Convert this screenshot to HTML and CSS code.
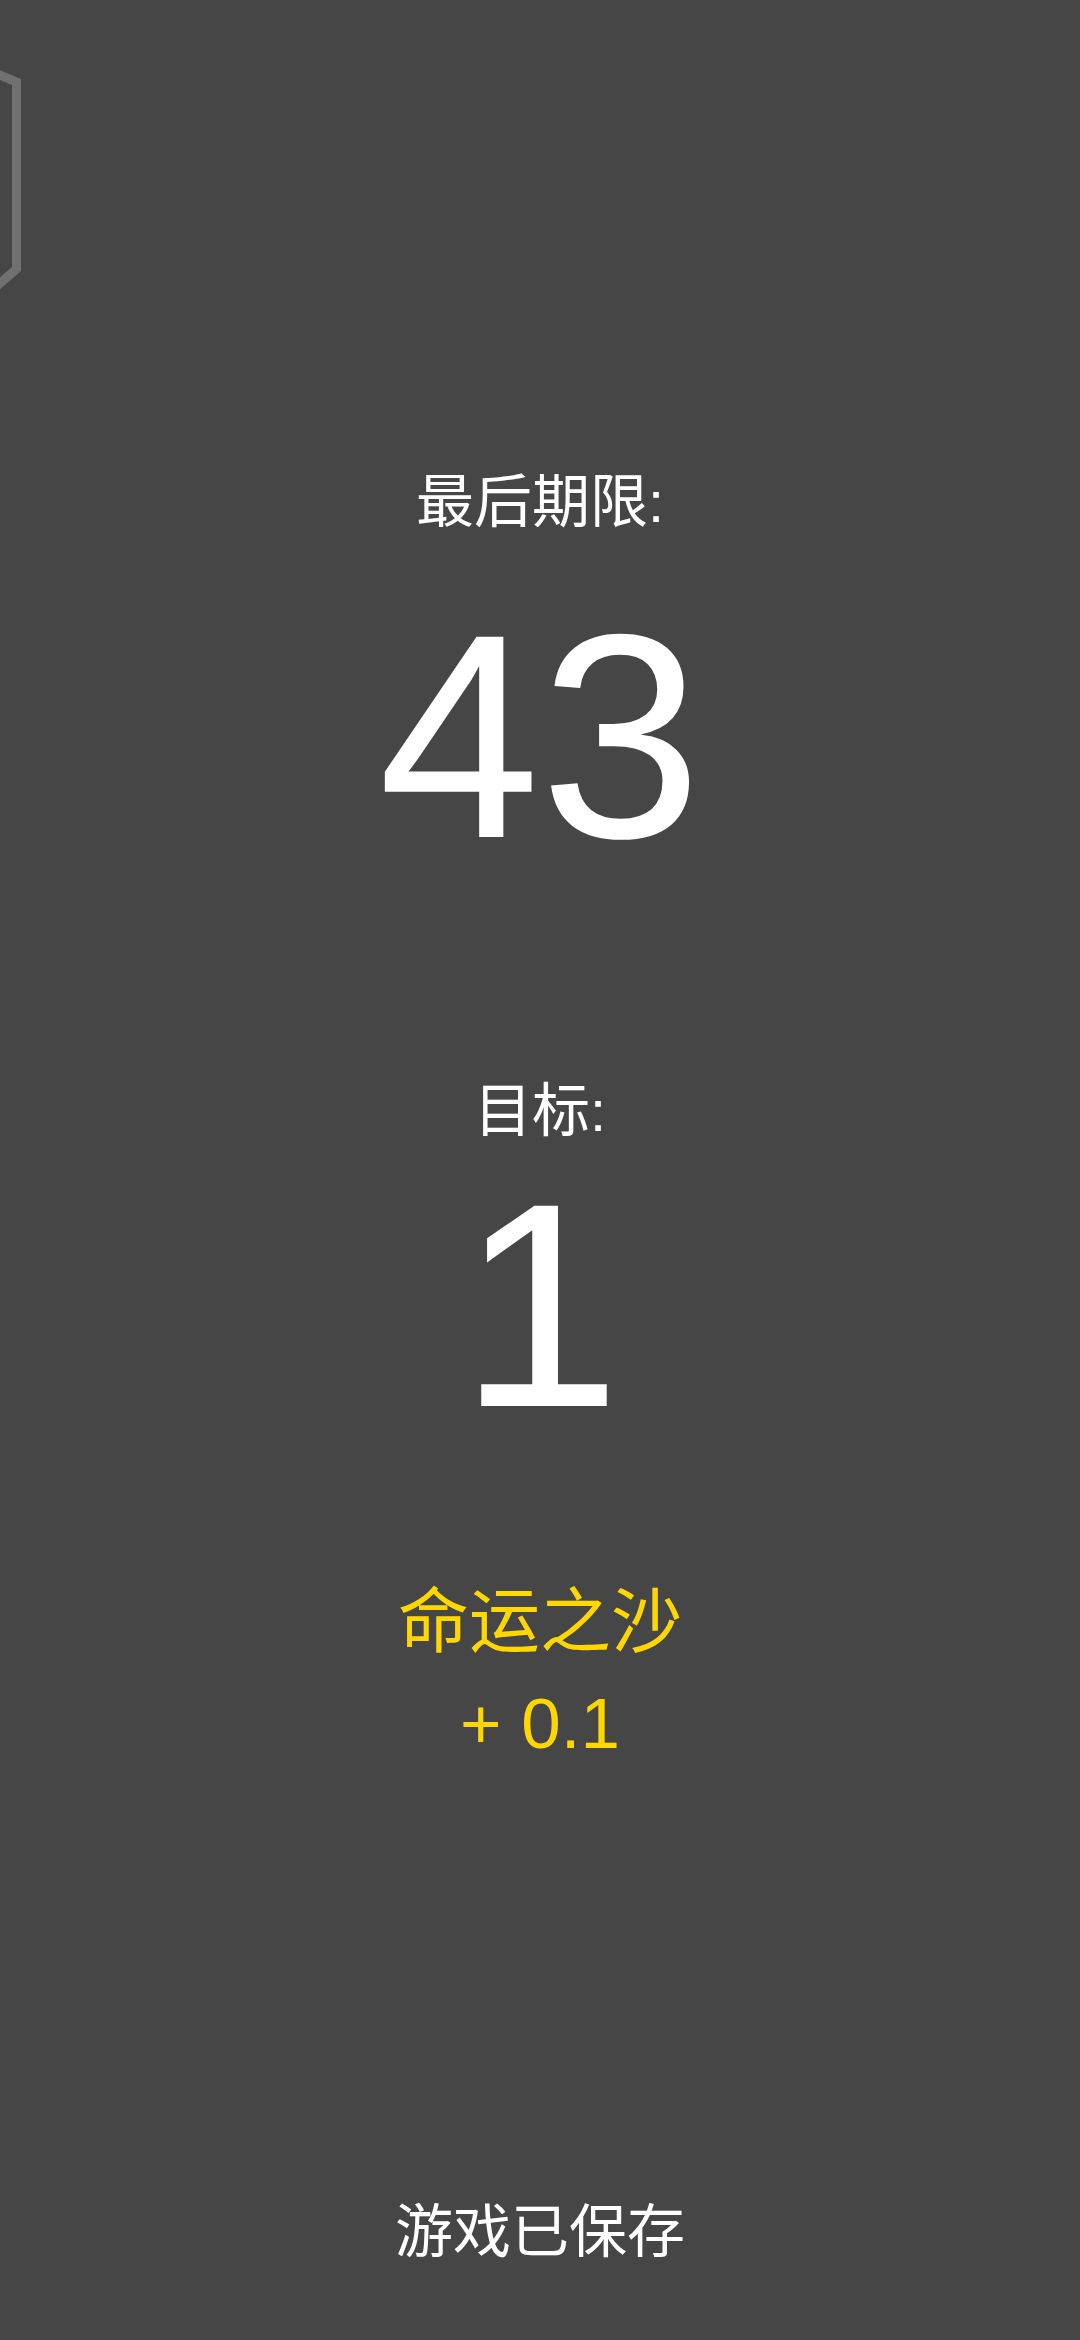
FILE: index.html
```html
<!DOCTYPE html>
<html lang="zh">
<head>
  <meta charset="UTF-8">
  <title>游戏已保存</title>
  <link rel="stylesheet" href="styles.css">
</head>
<body>
  <svg class="hexagon" width="30" height="240" viewBox="0 0 30 240" aria-hidden="true">
    <path d="M-10 9 L16.5 20 L16.5 207 L-10 230" fill="none" stroke="#707070" stroke-width="9"/>
  </svg>

  <main class="screen">
    <section class="deadline">
      <div class="label">最后期限:</div>
      <div class="number">43</div>
    </section>

    <section class="goal">
      <div class="label">目标:</div>
      <div class="number">1</div>
    </section>

    <section class="reward">
      <div>命运之沙</div>
      <div>+ 0.1</div>
    </section>

    <div class="saved">游戏已保存</div>
  </main>
</body>
</html>
```

FILE: styles.css
```css
html, body {
  margin: 0;
  padding: 0;
  height: 100%;
}

body {
  background-color: #464646;
  color: white;
  font-family: "Liberation Sans", "Noto Sans CJK SC", sans-serif;
  overflow: hidden;
}

.hexagon {
  position: absolute;
  left: 0;
  top: 62px;
}

.screen {
  display: flex;
  flex-direction: column;
  align-items: center;
  height: 2340px;
  box-sizing: border-box;
  padding-top: 462px;
  text-align: center;
}

.label {
  font-size: 58px;
  line-height: 80px;
}

.number {
  font-size: 291px;
  line-height: 250px;
}

.deadline .number {
  margin-top: 70px;
}

.goal {
  margin-top: 209px;
}

.goal .number {
  margin-top: 30px;
}

.reward {
  margin-top: 140px;
  color: #ffd700;
  font-size: 71px;
  line-height: 102px;
}

.saved {
  margin-top: auto;
  margin-bottom: 68px;
  font-size: 58px;
  line-height: 80px;
}
```
